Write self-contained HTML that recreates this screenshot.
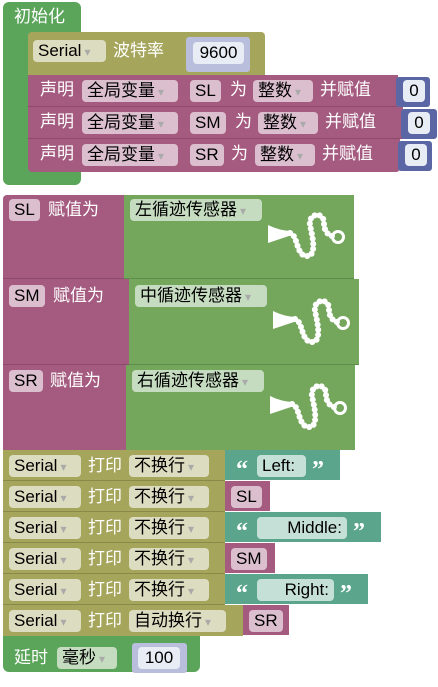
<!DOCTYPE html>
<html><head><meta charset="utf-8"><style>
body{margin:0;width:438px;height:687px;background:#fff;position:relative;overflow:hidden;font-family:"Liberation Sans","Noto Sans CJK SC",sans-serif;}
div{position:absolute;box-sizing:border-box;}
.t{color:#fff;font-size:17px;line-height:20px;white-space:nowrap;}
.f{border-radius:4px;font-size:17px;line-height:22px;height:22px;color:#000;white-space:nowrap;padding:0 5px;}
.dd::after{content:"▾";font-size:12px;margin-left:3px;color:#aaa;}
.g{background:#5ba55b}
.o{background:#a5a55b}
.p{background:#a55b80}
.b{background:#5b67a5}
.gr{background:#74a65c}
.tl{background:#5ba58c}
.fo{background:#dcdcc0}
.fp{background:#dcbfcf}
.fg{background:#c5dcc0}
.fw{background:#e8ecf4}
.ft{background:#c5e0d6}
.q{color:#fff;font-size:24px;font-weight:bold;line-height:24px;font-family:"Liberation Serif",serif;}
</style></head><body>
<div class="g" style="left:3px;top:2px;width:78px;height:183px;border-radius:6px"></div>
<div class="t" style="left:14px;top:7px">初始化</div>
<div class="o" style="left:28px;top:32px;width:237px;height:43px;border-radius:4px 4px 0 0"></div>
<div class="f fo dd" style="left:33px;top:40px;width:73px;">Serial</div>
<div class="t" style="left:113px;top:41px">波特率</div>
<div style="left:186px;top:37px;width:64px;height:35px;background:#b8bedc;border-radius:3px"></div>
<div class="f fw" style="left:193px;top:42px;width:51px;text-align:center">9600</div>

<div class="p" style="left:28px;top:75px;width:370px;height:32px;border-bottom:1px solid #8e4a6c"></div>
<div class="p" style="left:28px;top:107px;width:375px;height:32px;border-bottom:1px solid #8e4a6c"></div>
<div class="p" style="left:28px;top:139px;width:372px;height:33px;border-radius:0 0 4px 4px"></div>
<div class="b" style="left:396px;top:77px;width:34px;height:30px;border-radius:3px"></div>
<div class="b" style="left:401px;top:109px;width:36px;height:30px;border-radius:3px"></div>
<div class="b" style="left:398px;top:141px;width:34px;height:30px;border-radius:3px"></div>

<div class="t" style="left:40px;top:80px">声明</div>
<div class="f fp dd" style="left:82px;top:80px;width:96px">全局变量</div>
<div class="f fp" style="left:190px;top:80px">SL</div>
<div class="t" style="left:230px;top:80px">为</div>
<div class="f fp dd" style="left:253px;top:80px;width:60px">整数</div>
<div class="t" style="left:320px;top:80px">并赋值</div>
<div class="f fw" style="left:403px;top:80px;width:22px;padding:0;text-align:center">0</div>

<div class="t" style="left:40px;top:112px">声明</div>
<div class="f fp dd" style="left:82px;top:112px;width:96px">全局变量</div>
<div class="f fp" style="left:190px;top:112px">SM</div>
<div class="t" style="left:235px;top:112px">为</div>
<div class="f fp dd" style="left:258px;top:112px;width:60px">整数</div>
<div class="t" style="left:325px;top:112px">并赋值</div>
<div class="f fw" style="left:408px;top:112px;width:22px;padding:0;text-align:center">0</div>

<div class="t" style="left:40px;top:144px">声明</div>
<div class="f fp dd" style="left:82px;top:144px;width:96px">全局变量</div>
<div class="f fp" style="left:190px;top:144px">SR</div>
<div class="t" style="left:231px;top:144px">为</div>
<div class="f fp dd" style="left:255px;top:144px;width:60px">整数</div>
<div class="t" style="left:322px;top:144px">并赋值</div>
<div class="f fw" style="left:405px;top:144px;width:22px;padding:0;text-align:center">0</div>

<div class="p" style="left:3px;top:195px;width:122px;height:84px;border-radius:4px 0 0 0;border-bottom:1px solid #8e4a6c"></div>
<div class="gr" style="left:124px;top:195px;width:230px;height:84px;border-bottom:1px solid #5e8c4a"></div>
<div class="f fp" style="left:9px;top:199px">SL</div>
<div class="t" style="left:48px;top:200px">赋值为</div>
<div class="f fg dd" style="left:130px;top:199px;width:132px">左循迹传感器</div>

<div class="p" style="left:3px;top:279px;width:127px;height:86px;border-bottom:1px solid #8e4a6c"></div>
<div class="gr" style="left:129px;top:279px;width:230px;height:86px;border-bottom:1px solid #5e8c4a"></div>
<div class="f fp" style="left:9px;top:285px">SM</div>
<div class="t" style="left:53px;top:286px">赋值为</div>
<div class="f fg dd" style="left:135px;top:285px;width:132px">中循迹传感器</div>

<div class="p" style="left:3px;top:365px;width:124px;height:85px"></div>
<div class="gr" style="left:126px;top:365px;width:229px;height:85px"></div>
<div class="f fp" style="left:9px;top:370px">SR</div>
<div class="t" style="left:50px;top:371px">赋值为</div>
<div class="f fg dd" style="left:132px;top:370px;width:132px">右循迹传感器</div>

<svg style="position:absolute;left:0;top:0" width="438" height="687">
<defs><g id="ic" fill="none" stroke="#fff">
<path d="M0,0 Q12,6 24,6 L24,10 L0,18 Z" fill="#fff" stroke="none"/>
<path d="M22,8 C30,10 28,30 38,31 C50,32 44,10 42,0 C40,-12 56,-14 56,-2 C56,6 60,10 64,11" stroke-width="6" stroke-dasharray="0.1 5" stroke-linecap="round"/>
<circle cx="70" cy="12" r="5.5" stroke-width="3"/>
</g></defs>
<use href="#ic" x="268" y="225"/>
<use href="#ic" x="273" y="311"/>
<use href="#ic" x="270" y="396"/>
</svg>

<div class="o" style="left:3px;top:450px;width:222px;height:31px;border-bottom:1px solid #8a8a48"></div>
<div class="tl" style="left:225px;top:450px;width:115px;height:30px"></div>
<div class="o" style="left:3px;top:481px;width:222px;height:31px;border-bottom:1px solid #8a8a48"></div>
<div class="p" style="left:225px;top:481px;width:45px;height:30px"></div>
<div class="o" style="left:3px;top:512px;width:222px;height:31px;border-bottom:1px solid #8a8a48"></div>
<div class="tl" style="left:225px;top:512px;width:156px;height:30px"></div>
<div class="o" style="left:3px;top:543px;width:222px;height:31px;border-bottom:1px solid #8a8a48"></div>
<div class="p" style="left:225px;top:543px;width:50px;height:30px"></div>
<div class="o" style="left:3px;top:574px;width:222px;height:31px;border-bottom:1px solid #8a8a48"></div>
<div class="tl" style="left:225px;top:574px;width:143px;height:30px"></div>
<div class="o" style="left:3px;top:605px;width:240px;height:31px"></div>
<div class="p" style="left:243px;top:605px;width:46px;height:30px"></div>

<div class="f fo dd" style="left:9px;top:455px;width:72px">Serial</div><div class="t" style="left:88px;top:456px">打印</div><div class="f fo dd" style="left:129px;top:455px;width:80px">不换行</div>
<div class="q" style="left:236px;top:458px">“</div><div class="f ft" style="left:257px;top:455px;width:49px">Left:</div><div class="q" style="left:312px;top:458px">”</div>

<div class="f fo dd" style="left:9px;top:486px;width:72px">Serial</div><div class="t" style="left:88px;top:487px">打印</div><div class="f fo dd" style="left:129px;top:486px;width:80px">不换行</div>
<div class="f fp" style="left:231px;top:486px">SL</div>

<div class="f fo dd" style="left:9px;top:517px;width:72px">Serial</div><div class="t" style="left:88px;top:518px">打印</div><div class="f fo dd" style="left:129px;top:517px;width:80px">不换行</div>
<div class="q" style="left:236px;top:520px">“</div><div class="f ft" style="left:257px;top:517px;width:90px;text-align:right">Middle:</div><div class="q" style="left:353px;top:520px">”</div>

<div class="f fo dd" style="left:9px;top:548px;width:72px">Serial</div><div class="t" style="left:88px;top:549px">打印</div><div class="f fo dd" style="left:129px;top:548px;width:80px">不换行</div>
<div class="f fp" style="left:231px;top:548px">SM</div>

<div class="f fo dd" style="left:9px;top:579px;width:72px">Serial</div><div class="t" style="left:88px;top:580px">打印</div><div class="f fo dd" style="left:129px;top:579px;width:80px">不换行</div>
<div class="q" style="left:236px;top:582px">“</div><div class="f ft" style="left:257px;top:579px;width:77px;text-align:right">Right:</div><div class="q" style="left:340px;top:582px">”</div>

<div class="f fo dd" style="left:9px;top:610px;width:72px">Serial</div><div class="t" style="left:88px;top:611px">打印</div><div class="f fo dd" style="left:129px;top:610px;width:97px">自动换行</div>
<div class="f fp" style="left:249px;top:610px">SR</div>

<div class="g" style="left:3px;top:636px;width:197px;height:36px;border-radius:0 0 6px 6px"></div>
<div class="t" style="left:14px;top:648px">延时</div>
<div class="f fg dd" style="left:57px;top:647px;width:60px">毫秒</div>
<div style="left:132px;top:643px;width:55px;height:30px;background:#b8bedc;border-radius:3px"></div>
<div class="f fw" style="left:138px;top:647px;width:42px;text-align:center">100</div>
</body></html>
